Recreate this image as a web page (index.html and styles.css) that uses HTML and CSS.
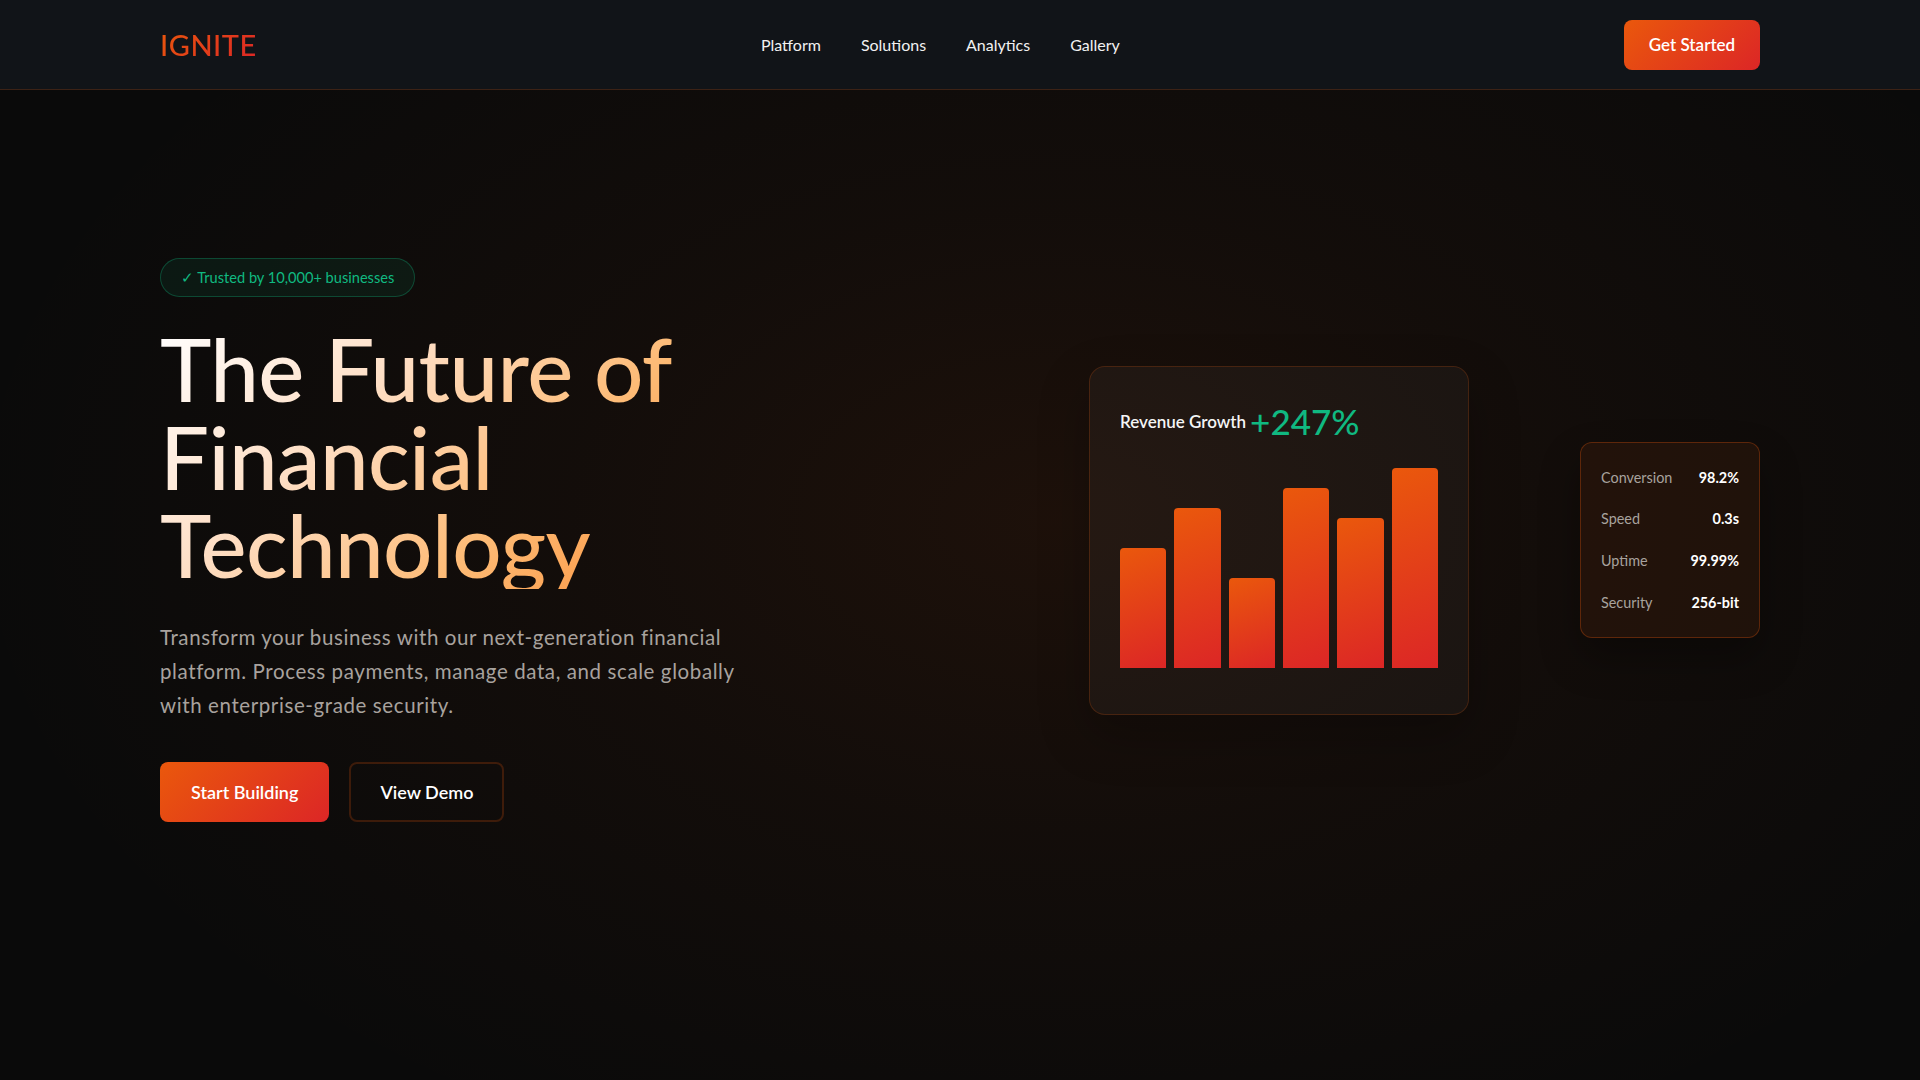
FILE: index.html
```html
<!DOCTYPE html>
<html lang="en">
<head>
<meta charset="utf-8">
<title>Ignite</title>
<link rel="stylesheet" href="styles.css">
</head>
<body>
<nav class="nav">
  <div class="nav-inner">
    <a class="logo" href="#">IGNITE</a>
    <ul class="nav-links">
      <li><a href="#">Platform</a></li>
      <li><a href="#">Solutions</a></li>
      <li><a href="#">Analytics</a></li>
      <li><a href="#">Gallery</a></li>
    </ul>
    <a class="btn btn-primary btn-nav" href="#">Get Started</a>
  </div>
</nav>

<main class="hero">
  <div class="hero-inner">
    <div class="hero-text">
      <span class="badge">✓ Trusted by 10,000+ businesses</span>
      <h1 class="headline">The Future of<br>Financial<br>Technology</h1>
      <p class="lead">Transform your business with our next-generation financial platform. Process payments, manage data, and scale globally with enterprise-grade security.</p>
      <div class="actions">
        <a class="btn btn-primary btn-lg" href="#">Start Building</a>
        <a class="btn btn-outline btn-lg" href="#">View Demo</a>
      </div>
    </div>
    <div class="hero-visual">
      <div class="chart-card">
        <div class="chart-title">
          <span class="chart-label">Revenue Growth</span>
          <span class="chart-value">+247%</span>
        </div>
        <div class="bars">
          <div class="bar" style="height:60%"></div>
          <div class="bar" style="height:80%"></div>
          <div class="bar" style="height:45%"></div>
          <div class="bar" style="height:90%"></div>
          <div class="bar" style="height:75%"></div>
          <div class="bar" style="height:100%"></div>
        </div>
      </div>
      <div class="stats-card">
        <div class="stat"><span class="stat-label">Conversion</span><span class="stat-value">98.2%</span></div>
        <div class="stat"><span class="stat-label">Speed</span><span class="stat-value">0.3s</span></div>
        <div class="stat"><span class="stat-label">Uptime</span><span class="stat-value">99.99%</span></div>
        <div class="stat"><span class="stat-label">Security</span><span class="stat-value">256-bit</span></div>
      </div>
    </div>
  </div>
</main>
</body>
</html>
```

FILE: styles.css
```css
* { box-sizing: border-box; }

html, body { margin: 0; padding: 0; }

body {
  font-family: Lato, "Open Sans", "Noto Sans", sans-serif;
  background: #0a0a0a;
  color: #ffffff;
  min-height: 100vh;
}

a { text-decoration: none; color: inherit; }

.nav {
  position: fixed;
  top: 0;
  left: 0;
  right: 0;
  z-index: 10;
  background: #111418;
  border-bottom: 1px solid rgba(234, 88, 12, 0.2);
}

.nav-inner {
  max-width: 1600px;
  margin: 0 auto;
  height: 89px;
  display: flex;
  align-items: center;
  justify-content: space-between;
}

.logo {
  font-size: 29px;
  font-weight: 500;
  letter-spacing: 0.5px;
  background: linear-gradient(135deg, #ea580c, #dc2626);
  -webkit-background-clip: text;
  background-clip: text;
  color: transparent;
}

.nav-links {
  list-style: none;
  margin: 0;
  padding: 0;
  display: flex;
  gap: 40px;
  font-size: 16px;
  color: #f1f1f1;
}

.btn {
  display: inline-flex;
  align-items: center;
  justify-content: center;
  border-radius: 8px;
  font-weight: 600;
  color: #fff;
}

.btn-primary {
  background: linear-gradient(135deg, #ea580c 0%, #dc2626 100%);
}

.btn-nav {
  height: 50px;
  padding: 0 24px;
  font-size: 17px;
  width: 136px;
}

.hero {
  min-height: 100vh;
  display: flex;
  align-items: center;
  background: radial-gradient(ellipse 1100px 700px at 55% 48%, rgba(234, 88, 12, 0.085) 0%, rgba(234, 88, 12, 0.04) 45%, rgba(234, 88, 12, 0) 100%);
}

.hero-inner {
  width: 1600px;
  margin: 0 auto;
  display: flex;
  align-items: center;
  justify-content: space-between;
}

.hero-text {
  width: 720px;
}

.badge {
  display: inline-flex;
  align-items: center;
  height: 39px;
  padding: 0 20px;
  border-radius: 999px;
  background: rgba(16, 185, 129, 0.08);
  border: 1px solid rgba(16, 185, 129, 0.3);
  color: #10b981;
  font-size: 14.6px;
}

.headline {
  margin: 28px 0 0;
  font-size: 87px;
  line-height: 88px;
  font-weight: 500;
  letter-spacing: -0.6px;
  width: fit-content;
  background: linear-gradient(135deg, #ffffff 0%, #fedfc6 35%, #fdba74 70%, #fb923c 100%);
  -webkit-background-clip: text;
  background-clip: text;
  color: transparent;
}

.lead {
  margin: 31px 0 0;
  max-width: 600px;
  font-size: 20.5px;
  line-height: 34px;
  letter-spacing: 0.6px;
  color: #a8a29e;
}

.actions {
  margin-top: 40px;
  display: flex;
  gap: 20px;
}

.btn-lg {
  height: 60px;
  padding: 0 31px;
  font-size: 18px;
}

.btn-outline {
  background: transparent;
  border: 2px solid rgba(234, 88, 12, 0.22);
  padding: 0 29px;
}

.hero-visual {
  display: flex;
  align-items: center;
  gap: 111px;
}

.chart-card {
  width: 380px;
  height: 349px;
  padding: 30px;
  border-radius: 16px;
  background: rgba(255, 255, 255, 0.035);
  border: 1px solid rgba(234, 88, 12, 0.2);
  display: flex;
  flex-direction: column;
  box-shadow: 0 20px 50px rgba(0, 0, 0, 0.25);
}

.chart-title {
  display: flex;
  align-items: center;
  gap: 4px;
  height: 50px;
}

.chart-label {
  font-size: 17px;
  font-weight: 600;
  color: #f5f5f5;
}

.chart-value {
  font-size: 35px;
  font-weight: 500;
  color: #10b981;
  line-height: 1;
}

.bars {
  margin-top: 21px;
  height: 200px;
  display: flex;
  align-items: flex-end;
  gap: 8px;
}

.bar {
  flex: 1;
  border-radius: 4px 4px 0 0;
  background: linear-gradient(160deg, #ea580c 0%, #dc2626 100%);
}

.stats-card {
  width: 180px;
  padding: 24px 20px;
  border-radius: 12px;
  background: rgba(234, 88, 12, 0.08);
  border: 1px solid rgba(234, 88, 12, 0.3);
  display: flex;
  flex-direction: column;
  gap: 20px;
  box-shadow: 0 20px 40px rgba(0, 0, 0, 0.3);
}

.stat {
  display: flex;
  justify-content: space-between;
  align-items: center;
  font-size: 14.4px;
  line-height: 21.6px;
}

.stat-label { color: #a8a29e; }

.stat-value { font-weight: 700; color: #ffffff; }
```
